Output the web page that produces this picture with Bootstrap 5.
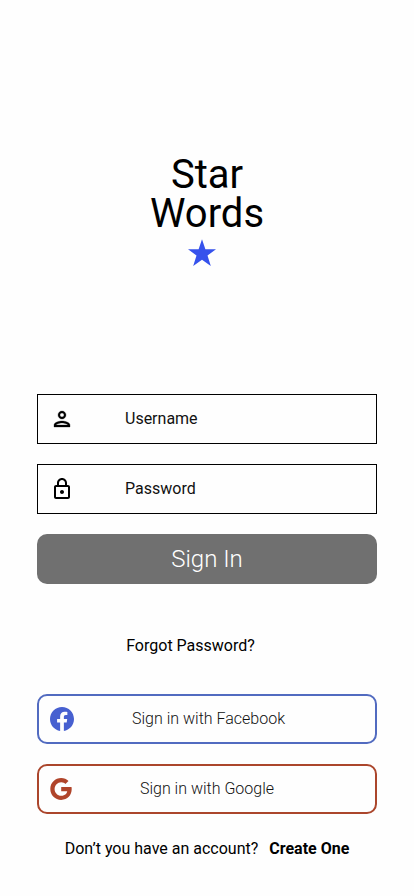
<!DOCTYPE html>
<html lang="en">
<head>
<meta charset="utf-8">
<meta name="viewport" content="width=device-width, initial-scale=1">
<title>Star Words</title>
<link href="https://cdn.jsdelivr.net/npm/bootstrap@5.3.0/dist/css/bootstrap.min.css" rel="stylesheet">
<style>
  body { font-family: Roboto, sans-serif; font-size: 16px; line-height: 24px; color: #000; background: #fefefe; }
  .login { width: 414px; height: 896px; padding: 155px 37px 0; }
  .brand { height: 239px; }
  .brand-name { font-size: 40px; line-height: 39px; font-weight: 400; }
  .brand-star { width: 28px; height: 27px; margin: 6px 10px 0 0; }
  .field { height: 50px; border: 1px solid #000; padding-left: 12px; }
  .field .form-control { padding: 0; margin-left: 51px; color: #000; background: none; line-height: 24px; }
  .field .form-control::placeholder { color: #111; opacity: 1; }
  .btn-sign { height: 50px; border-radius: 10px; background: #707070; color: #fff; font-size: 24px; font-weight: 300; border: 0; }
  .forgot { margin: 50px 33px 36px 0; }
  .btn-social { height: 50px; border: 2px solid; border-radius: 10px; padding: 0 11px; background: #fefefe; color: #111; font-weight: 300; }
  .btn-social span { margin-right: 22px; }
  .btn-fb span { margin-right: 21px; }
  .btn-fb { border-color: #526bc0; }
  .btn-gg { border-color: #ab462c; }
  .fields { gap: 20px; }
  .signup { margin-top: 23px; gap: 11px; }
</style>
</head>
<body>
<main class="login d-flex flex-column">
  <header class="brand d-flex flex-column align-items-center text-center flex-shrink-0">
    <h1 class="brand-name m-0">Star<br>Words</h1>
    <svg class="brand-star" viewBox="0 0 28 27" fill="#3652ec"><path d="M14 .2l3.400 10H28l-8.500 6.400 3.300 10.300L14 20.700l-8.800 6.200 3.300-10.300L0 10.200h10.600z"/></svg>
  </header>
  <form class="fields d-flex flex-column">
    <div class="field d-flex align-items-center">
      <svg class="flex-shrink-0" width="24" height="24" viewBox="0 0 24 24"><path d="M12 6c1.100 0 2 .9 2 2s-.9 2-2 2-2-.9-2-2 .9-2 2-2m0 10c2.700 0 5.800 1.290 6 2H6c.23-.72 3.310-2 6-2m0-12C9.790 4 8 5.790 8 8s1.790 4 4 4 4-1.790 4-4-1.790-4-4-4zm0 10c-2.670 0-8 1.340-8 4v2h16v-2c0-2.660-5.330-4-8-4z" stroke="#000" stroke-width=".3"/></svg>
      <input class="form-control border-0 shadow-none rounded-0" type="text" placeholder="Username" aria-label="Username">
    </div>
    <div class="field d-flex align-items-center">
      <svg class="flex-shrink-0" width="24" height="24" viewBox="0 0 24 24"><path d="M18 8h-1V6c0-2.760-2.240-5-5-5S7 3.240 7 6v2H6c-1.100 0-2 .9-2 2v10c0 1.100.9 2 2 2h12c1.100 0 2-.9 2-2V10c0-1.100-.9-2-2-2zM9 6c0-1.660 1.340-3 3-3s3 1.340 3 3v2H9V6zm9 14H6V10h12v10zm-6-3c1.100 0 2-.9 2-2s-.9-2-2-2-2 .9-2 2 .9 2 2 2z"/></svg>
      <input class="form-control border-0 shadow-none rounded-0" type="password" placeholder="Password" aria-label="Password">
    </div>
    <button class="btn btn-sign w-100 p-0" type="button">Sign In</button>
  </form>
  <a class="forgot text-center text-decoration-none text-black" href="#">Forgot Password?</a>
  <div class="fields d-flex flex-column">
    <button class="btn btn-social btn-fb d-flex align-items-center" type="button">
      <svg class="flex-shrink-0" width="24" height="24" viewBox="0 0 24 24" fill="#4760d0"><path d="M24 12.070C24 5.400 18.630 0 12 0S0 5.400 0 12.070C0 18.100 4.390 23.090 10.130 24v-8.440H7.080v-3.490h3.050V9.410c0-3.020 1.790-4.690 4.530-4.690 1.310 0 2.690.24 2.690.24v2.970h-1.520c-1.490 0-1.960.93-1.960 1.890v2.250h3.330l-.53 3.490h-2.800V24C19.610 23.090 24 18.100 24 12.070z"/></svg>
      <span class="flex-grow-1">Sign in with Facebook</span>
    </button>
    <button class="btn btn-social btn-gg d-flex align-items-center" type="button">
      <svg class="flex-shrink-0" width="22" height="22" viewBox="0 0 22 22" fill="#b0442a"><path d="M11.200 9h10.300c.1.600.2 1.300.2 2.100 0 6.300-4.200 10.800-10.500 10.800C5.200 21.900.3 17.100.3 11S5.200.1 11.200.1c2.900 0 5.400 1.100 7.300 2.800l-3.100 3c-.8-.8-2.300-1.700-4.200-1.700-3.600 0-6.600 3-6.600 6.800s3 6.800 6.600 6.800c4.200 0 5.800-3 6-4.600h-6z"/></svg>
      <span class="flex-grow-1">Sign in with Google</span>
    </button>
  </div>
  <footer class="signup d-flex justify-content-center">
    <span>Don’t you have an account?</span>
    <a class="fw-bold text-black text-decoration-none" href="#">Create One</a>
  </footer>
</main>
<script src="https://cdn.jsdelivr.net/npm/bootstrap@5.3.0/dist/js/bootstrap.bundle.min.js"></script>
</body>
</html>
